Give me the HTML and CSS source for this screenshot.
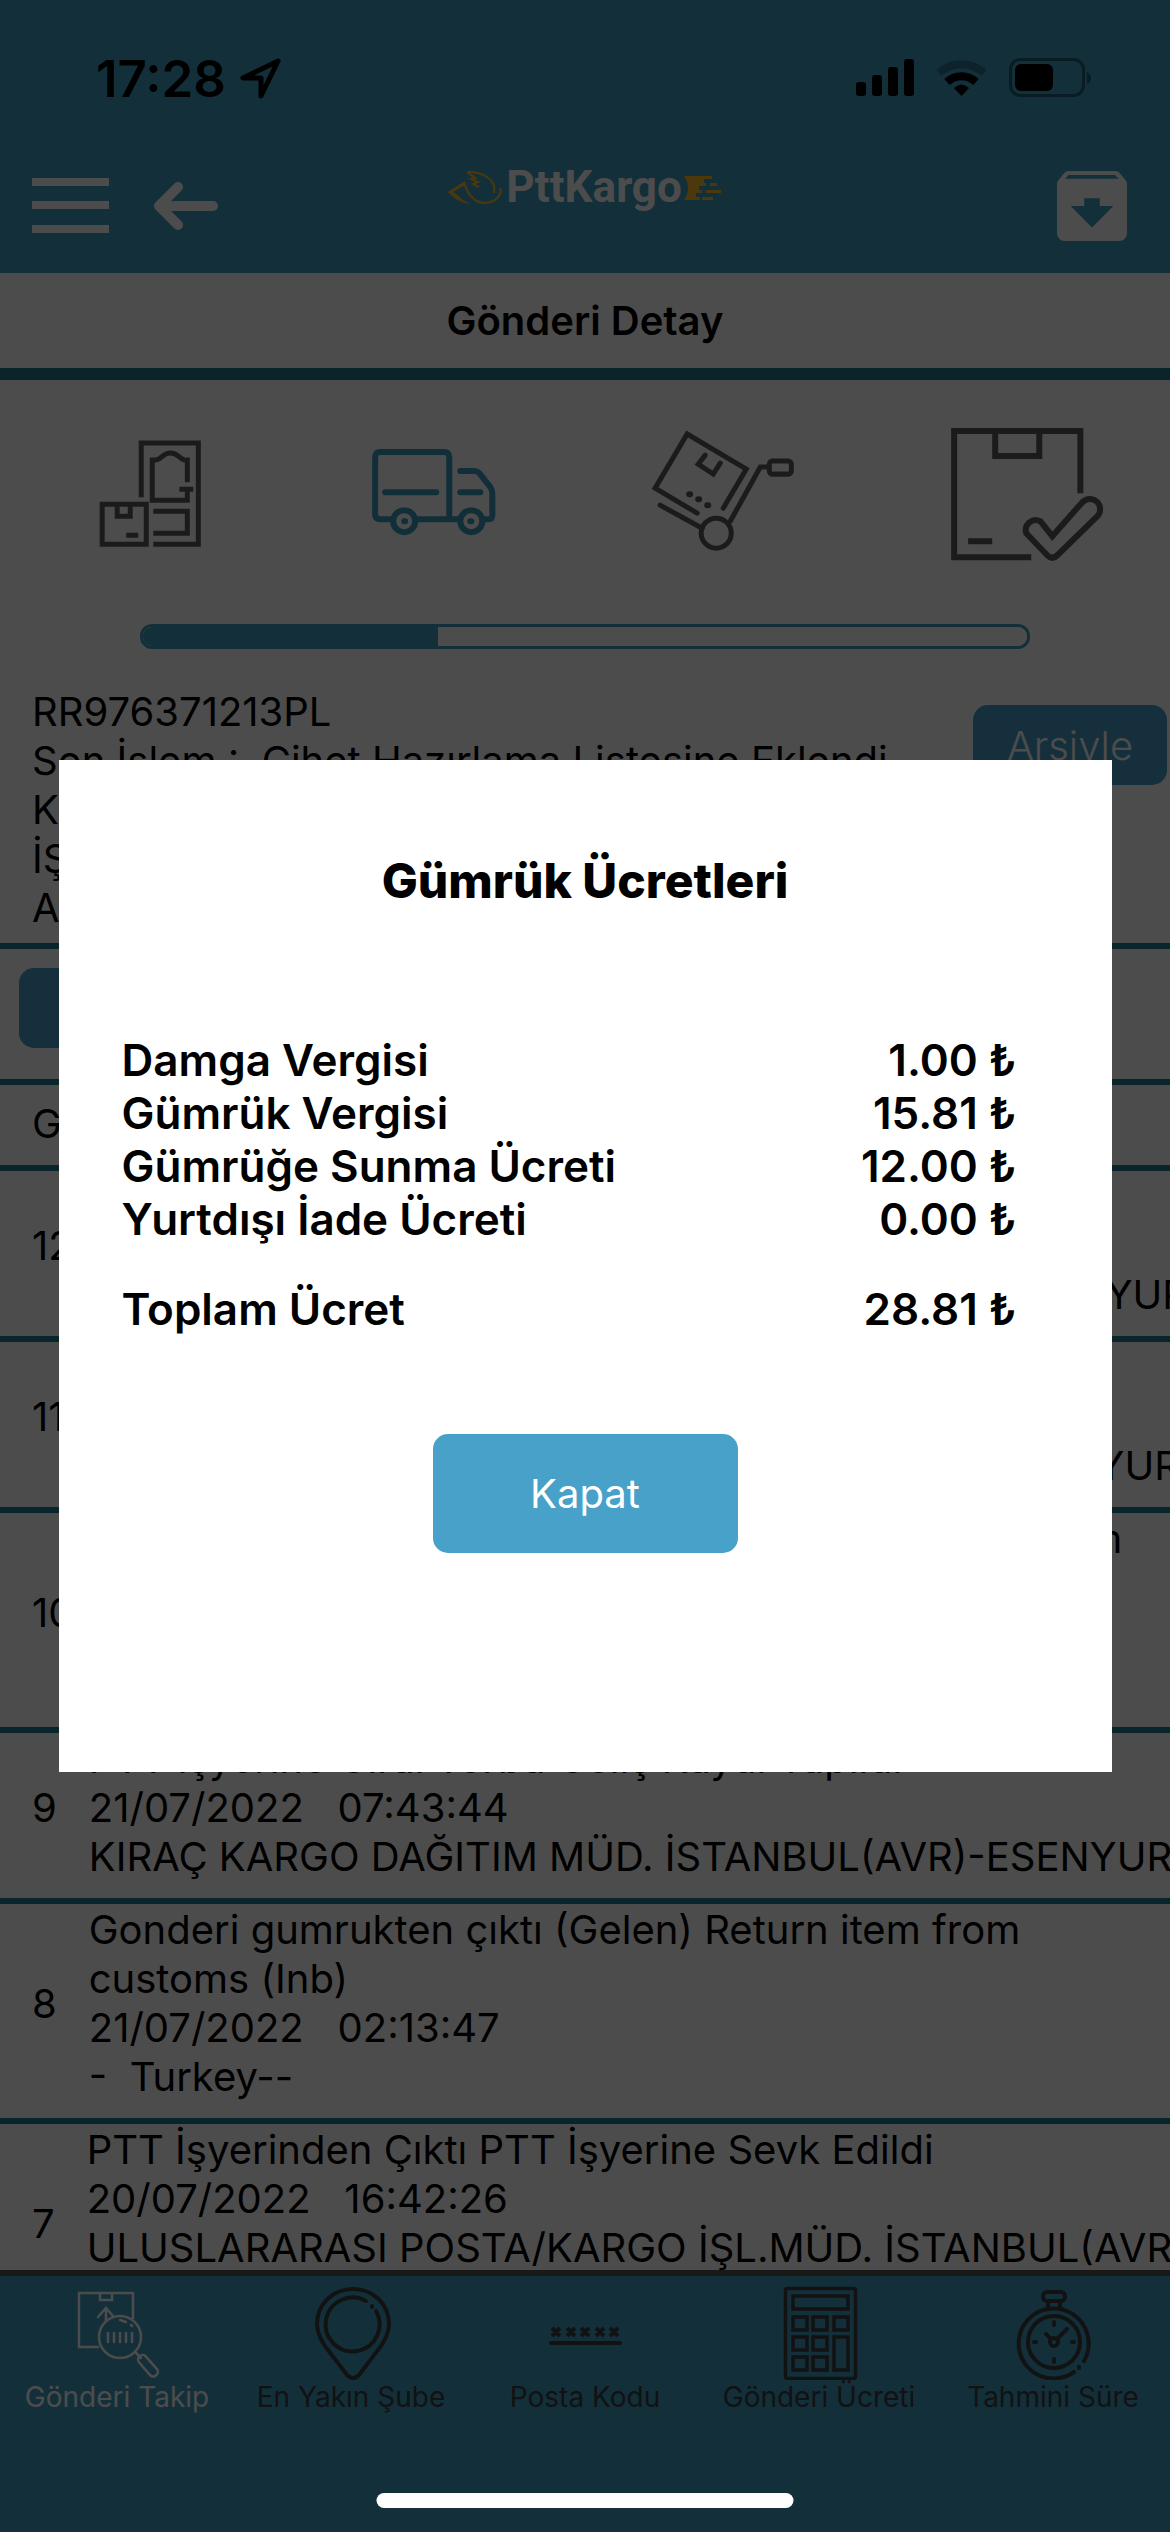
FILE: index.html
```html
<!DOCTYPE html>
<html lang="tr">
<head>
    <meta charset="UTF-8">
    <meta name="viewport" content="width=device-width, initial-scale=1.0">
    <title>PttKargo - Gönderi Detay</title>
    <link rel="stylesheet" href="styles.css">
</head>
<body>
    <div class="app">
        <header class="header">
            <div class="status-bar">
                <div class="clock">
                    <span>17:28</span>
                    <svg width="41" height="41" viewBox="0 0 41 41" fill="none" stroke="#000" stroke-width="5" stroke-linejoin="round">
                        <path d="M38 3L3 20H21V38Z"/>
                    </svg>
                </div>
                <svg width="236" height="40" viewBox="0 0 236 40">
                    <rect x="0" y="24" width="10" height="14" rx="3"/>
                    <rect x="16" y="17" width="10" height="21" rx="3"/>
                    <rect x="32" y="9" width="10" height="29" rx="3"/>
                    <rect x="48" y="1" width="10" height="37" rx="3"/>
                    <g fill="none" stroke="#000" stroke-width="8">
                        <path d="M83 15A33 33 0 0 1 128 15" opacity=".25"/>
                        <path d="M91 24A21 21 0 0 1 120 24"/>
                    </g>
                    <path d="M105.500 38L98 30Q105.500 23 113 30Z"/>
                    <rect x="154.500" y="1.500" width="73" height="36" rx="10" fill="none" stroke="#000" stroke-width="3" opacity=".4"/>
                    <rect x="159" y="6" width="38" height="27" rx="6"/>
                    <path d="M231 14Q235 16 235 20Q235 24 231 26Z" opacity=".4"/>
                </svg>
            </div>
            <div class="nav-bar">
                <div class="nav-left">
                    <button type="button" class="icon-button" aria-label="Menü">
                        <svg width="77" height="55" viewBox="0 0 77 55" fill="#fff">
                            <path d="M0 0H77V8H0ZM0 23H77V31H0ZM0 47H77V55H0Z"/>
                        </svg>
                    </button>
                    <button type="button" class="icon-button" aria-label="Geri">
                        <svg width="64" height="48" viewBox="0 0 64 48" fill="none" stroke="#fff" stroke-width="10" stroke-linecap="round" stroke-linejoin="round">
                            <path d="M59 24H5M24 5L5 24L24 43"/>
                        </svg>
                    </button>
                </div>
                <div class="logo">
                    <svg width="56" height="36" viewBox="0 0 56 36" fill="none" stroke="#fdbc2c" stroke-width="2">
                        <path d="M0 22L17 11L18 18L15 16L5 22C12 26 14 31 23 34C12 33 6 28 0 22Z" fill="#fdbc2c" stroke="none"/>
                        <path d="M17 14C19 24 27 33 37 33C45 33 50 29 53 22L52 18"/>
                        <path d="M20 2C34 2 49 9 46 23"/>
                        <path d="M19 2L27 8L23 9L30 12L25 14L31 17"/>
                    </svg>
                    <span>PttKargo</span>
                    <svg width="38" height="26" viewBox="0 0 38 26" fill="#fdbc2c">
                        <path d="M0 1H28V4H20V8H22V11H15V15H18V18H12V22H16V25H0Q8 13 0 1Z"/>
                        <path d="M26 8H33V11H26ZM22 15H37V18H22ZM18 22H29V25H18Z"/>
                    </svg>
                </div>
                <div class="nav-right">
                    <button type="button" class="icon-button" aria-label="Arşiv">
                        <svg width="70" height="70" viewBox="3 3 18 18" fill="#fff">
                            <path d="M20.540 5.230l-1.390-1.680C18.880 3.210 18.470 3 18 3H6c-.47 0-.88.21-1.160.55L3.460 5.230C3.170 5.570 3 6.020 3 6.500V19c0 1.100.9 2 2 2h14c1.100 0 2-.9 2-2V6.500c0-.48-.17-.93-.46-1.270zM12 17.500L6.500 12H10v-2h4v2h3.500L12 17.500zM5.120 5l.81-1h12l.94 1H5.120z"/>
                        </svg>
                    </button>
                </div>
            </div>
        </header>

        <main class="content">
            <h1 class="page-title">Gönderi Detay</h1>

            <div class="steps">
                <svg viewBox="0 0 292 180" fill="none" stroke="#5c5c5c" stroke-width="5">
                    <path d="M141 97V43H198V144H153"/>
                    <path d="M187 82V60H184C178 58 178 53 170 53C162 53 161 60 155 60H152V100H187V90M179 89H193"/>
                    <path d="M153 111H187V133H153"/>
                    <path d="M102 104H146V144H102ZM117 104V116H130V104M126 135H138"/>
                </svg>
                <svg viewBox="0 0 292 180" fill="none" stroke="#3c9cbd" stroke-width="6" stroke-linecap="round" stroke-linejoin="round">
                    <path d="M99 119H87Q82 119 82 114V58Q82 52 87 52H151Q156 52 156 58V119M124 119H165"/>
                    <path d="M167 71H181Q184 71 186 73L197 87Q199 90 199 93V115Q199 119 195 119H190"/>
                    <path d="M92 92H143M167 92H187"/>
                    <circle cx="111" cy="121" r="11"/>
                    <circle cx="178" cy="121" r="11"/>
                    <path d="M111 121h1M177 121h1"/>
                </svg>
                <svg viewBox="0 0 292 180" fill="none" stroke="#5c5c5c" stroke-width="5" stroke-linecap="round">
                    <path d="M138 108L161 69L102 34L70 88L112 113"/>
                    <path d="M120 55L113 64L128 74L135 63"/>
                    <path d="M104 94h1M113 99h1M122 105h1" stroke-width="6"/>
                    <path d="M75 105L117 128"/>
                    <circle cx="131" cy="133" r="15"/>
                    <path d="M145 121L175 67H183"/>
                    <rect x="184" y="61" width="22" height="13" rx="3"/>
                </svg>
                <svg viewBox="0 0 292 180" fill="none" stroke="#5c5c5c" stroke-width="6">
                    <path d="M202 93V31H76V157H153"/>
                    <path d="M117 31V56H161V31M90 141H114"/>
                    <path d="M174 136L204 102A10 10 0 0 1 219 116L179 155Q174 160 169 155L148 133A10 10 0 0 1 162 121Z"/>
                </svg>
            </div>
            <progress class="progress" value="1" max="3" aria-label="Gönderi durumu"></progress>

            <section class="summary">
                <p>RR976371213PL<br>
                    Son İşlem :&nbsp; Cihet Hazırlama Listesine Eklendi<br>
                    Kabul İşyeri :&nbsp; ULUSLARARASI POSTA<br>
                    İŞL.MÜD. İSTANBUL(AVR)<br>
                    Alıcı :</p>
                <button type="button" class="button">Arşivle</button>
            </section>
            <div class="fees">
                <button type="button" class="button">Gümrük Ücretleri</button>
            </div>
            <h2 class="list-title">Gönderi Hareketleri</h2>

            <ol class="movements">
                <li>
                    <span>12</span>
                    <p>Cihet Hazırlama Listesine Eklendi<br>
                        21/07/2022 &nbsp; 09:12:30<br>
                        <span class="place">KIRAÇ KARGO DAĞITIM MÜD. İSTANBUL(AVR)-ESENYURT</span></p>
                </li>
                <li>
                    <span>11</span>
                    <p>Torba Açıldı Kayıt Yapıldı<br>
                        21/07/2022 &nbsp; 08:05:12<br>
                        <span class="place">KIRAÇ KARGO DAĞITIM MÜD. İSTANBUL(AVR)-ESENYURT</span></p>
                </li>
                <li>
                    <span>10</span>
                    <p>Gonderi gumruk sunumu (Gelen) Send item to custom (Inb)<br>
                        21/07/2022 &nbsp; 07:50:02<br>
                        - &nbsp;Turkey--</p>
                </li>
                <li>
                    <span>9</span>
                    <p>PTT İşyerine Giral Torba Geliş Kaydı Yapıldı<br>
                        21/07/2022 &nbsp; 07:43:44<br>
                        <span class="place">KIRAÇ KARGO DAĞITIM MÜD. İSTANBUL(AVR)-ESENYURT</span></p>
                </li>
                <li>
                    <span>8</span>
                    <p>Gonderi gumrukten çıktı (Gelen) Return item from customs (Inb)<br>
                        21/07/2022 &nbsp; 02:13:47<br>
                        - &nbsp;Turkey--</p>
                </li>
                <li>
                    <span>7</span>
                    <p>PTT İşyerinden Çıktı PTT İşyerine Sevk Edildi<br>
                        20/07/2022 &nbsp; 16:42:26<br>
                        <span class="place">ULUSLARARASI POSTA/KARGO İŞL.MÜD. İSTANBUL(AVR)</span><br>
                        Turkey</p>
                </li>
            </ol>
        </main>

        <nav class="tab-bar">
            <a href="#" class="active">
                <svg width="100" height="96" viewBox="0 0 100 96" fill="none" stroke="currentColor" stroke-width="2.500" stroke-linecap="round">
                    <path d="M66 34V9H12V63H31M33 9V16H45V9"/>
                    <path d="M31 33L39 24L46 32M39 25V37"/>
                    <circle cx="53" cy="53" r="21"/>
                    <path d="M41 49V58M47 49V58M53 49V58M59 49V58M65 49V58"/>
                    <path d="M53 36L59 38M64 41L65 42M69 69L74 74"/>
                    <rect x="-12" y="-4" width="25" height="9" rx="4" transform="translate(81 81) rotate(49)"/>
                </svg>
                Gönderi Takip
            </a>
            <a href="#">
                <svg width="100" height="96" viewBox="0 0 100 96" fill="none" stroke="currentColor" stroke-width="4" stroke-linecap="round">
                    <path d="M52 5C72 5 88 20 88 40C88 48 84 56 80 62L58 91Q52 97 46 91L24 62C20 56 16 48 16 40C16 20 32 5 52 5Z"/>
                    <path d="M65 17A27 27 0 1 0 75 27M71 22v1"/>
                </svg>
                En Yakın Şube
            </a>
            <a href="#">
                <svg width="100" height="96" viewBox="0 0 100 96" fill="none" stroke="currentColor" stroke-width="4">
                    <path d="M17 44l8 8m0-8l-8 8M32 44l8 8m0-8l-8 8M46 44l8 8m0-8l-8 8M61 44l8 8m0-8l-8 8M75 44l8 8m0-8l-8 8"/>
                    <path d="M16 59H85" stroke-linecap="round"/>
                </svg>
                Posta Kodu
            </a>
            <a href="#">
                <svg width="100" height="96" viewBox="0 0 100 96" fill="none" stroke="currentColor" stroke-width="3.500">
                    <rect x="16.500" y="4.500" width="70" height="90" rx="2"/>
                    <path d="M24 12H79V25H24Z"/>
                    <path d="M24 33H38V46H24ZM44 33H58V46H44ZM65 33H79V46H65Z"/>
                    <path d="M24 53H38V66H24ZM44 53H58V66H44ZM65 53H79V86H65Z"/>
                    <path d="M24 73H38V86H24ZM44 73H58V86H44Z"/>
                </svg>
                Gönderi Ücreti
            </a>
            <a href="#">
                <svg width="100" height="96" viewBox="0 0 100 96" fill="none" stroke="currentColor" stroke-width="4" stroke-linecap="round">
                    <rect x="40" y="8" width="22" height="9" rx="4"/>
                    <path d="M45 17V23M57 17V23"/>
                    <path d="M81 77A35 35 0 1 0 71 88M76 83v1"/>
                    <circle cx="51" cy="58" r="26"/>
                    <circle cx="51" cy="58" r="4"/>
                    <path d="M48 55L43 50M54 55L64 45M51 38V41M51 75V78M31 58H33M69 58H71"/>
                </svg>
                Tahmini Süre
            </a>
        </nav>
    </div>

    <div class="overlay">
        <div class="modal" role="dialog" aria-labelledby="modalTitle">
            <h2 id="modalTitle">Gümrük Ücretleri</h2>
            <div class="fee-list">
                <table>
                    <tbody>
                        <tr><th scope="row">Damga Vergisi</th><td>1.00 ₺</td></tr>
                        <tr><th scope="row">Gümrük Vergisi</th><td>15.81 ₺</td></tr>
                        <tr><th scope="row">Gümrüğe Sunma Ücreti</th><td>12.00 ₺</td></tr>
                        <tr><th scope="row">Yurtdışı İade Ücreti</th><td>0.00 ₺</td></tr>
                    </tbody>
                    <tfoot>
                        <tr><th scope="row">Toplam Ücret</th><td>28.81 ₺</td></tr>
                    </tfoot>
                </table>
            </div>
            <button type="button" class="button close">Kapat</button>
        </div>
        <div class="home-indicator"></div>
    </div>
</body>
</html>
```

FILE: styles.css
```css
* {
    box-sizing: border-box;
}

body {
    margin: 0;
    font-family: Inter, "Liberation Sans", sans-serif;
    font-size: 40px;
    line-height: 49px;
    color: #000;
    background-color: #fff;
}

h1, h2, p, ol {
    margin: 0;
    padding: 0;
}

svg {
    display: block;
}

.app {
    display: flex;
    flex-direction: column;
    height: 100vh;
    overflow: hidden;
}

/* header */

.header {
    flex: none;
    background-color: #3d9fc4;
}

.status-bar {
    display: flex;
    justify-content: space-between;
    align-items: center;
    height: 144px;
    padding: 12px 78px 0 96px;
}

.clock {
    display: flex;
    align-items: center;
    gap: 14px;
    font-size: 51px;
    font-weight: 600;
}

.nav-bar {
    display: grid;
    grid-template-columns: 1fr auto 1fr;
    align-items: center;
    height: 129px;
    padding: 0 32px 6px;
}

.nav-left {
    display: flex;
    align-items: center;
    gap: 45px;
}

.nav-right {
    display: flex;
    justify-content: flex-end;
    padding-right: 11px;
}

.icon-button {
    padding: 0;
    border: none;
    background: none;
    cursor: pointer;
}

.logo {
    display: flex;
    align-items: center;
    gap: 2px;
    padding-bottom: 36px;
    font-family: Roboto, sans-serif;
    font-size: 44px;
    font-weight: 700;
    color: #fff;
}

/* page */

.content {
    flex: 1;
    min-height: 0;
    overflow: hidden;
}

.page-title {
    padding: 23px 0;
    border-bottom: 12px solid #21788f;
    font-size: 40px;
    font-weight: 600;
    text-align: center;
}

.steps {
    display: grid;
    grid-template-columns: repeat(4, 1fr);
    padding: 20px 0 44px;
}

.steps svg {
    width: 100%;
}

.progress {
    display: block;
    width: 76%;
    height: 25px;
    margin: 0 auto;
    border: 3px solid #3d9fc4;
    border-radius: 12px;
    background-color: #fff;
    overflow: hidden;
    appearance: none;
}

.progress::-webkit-progress-bar {
    background-color: #fff;
}

.progress::-webkit-progress-value {
    background-color: #3d9fc4;
}

.summary {
    display: flex;
    justify-content: space-between;
    align-items: flex-start;
    padding: 38px 0 11px 32px;
    border-bottom: 6px solid #21788f;
}

.summary p {
    white-space: nowrap;
}

.button {
    height: 86px;
    padding: 0 32px;
    border: 3px solid #fff;
    border-radius: 18px;
    background-color: #48a1c8;
    color: #fff;
    font-family: inherit;
    font-size: 40px;
    font-weight: 400;
    cursor: pointer;
}

.summary .button {
    width: 200px;
    margin-top: 15px;
    font-weight: 300;
}

.fees {
    padding: 16px 16px 28px;
    border-bottom: 6px solid #21788f;
}

.fees .button {
    width: 500px;
}

.list-title {
    padding: 14px 32px 17px;
    border-bottom: 6px solid #21788f;
    font-size: 40px;
    font-weight: 400;
}

.movements {
    list-style: none;
}

.movements li {
    display: flex;
    align-items: center;
    gap: 32px;
    padding: 1px 0 17px 32px;
    border-bottom: 6px solid #21788f;
}

.movements p {
    flex: 1;
    min-width: 0;
}

.place {
    white-space: nowrap;
}

/* bottom tabs */

.tab-bar {
    flex: none;
    display: grid;
    grid-template-columns: repeat(5, 1fr);
    height: 262px;
    padding-top: 8px;
    border-top: 6px solid #555;
    background-color: #3d9fc4;
}

.tab-bar a {
    display: flex;
    flex-direction: column;
    align-items: center;
    font-size: 28px;
    line-height: 34px;
    color: #3c3c3c;
    text-decoration: none;
}

.tab-bar .active {
    color: #fff;
}

/* fee dialog */

.overlay {
    position: fixed;
    inset: 0;
    background-color: rgba(0, 0, 0, 0.7);
}

.modal {
    position: absolute;
    top: 30%;
    left: 5%;
    width: 90%;
    height: 40%;
    padding-top: 91px;
    background-color: #fff;
}

.modal h2 {
    font-size: 48px;
    line-height: 60px;
    font-weight: 800;
    text-align: center;
}

.fee-list {
    padding: 123px 95px 95px 63px;
}

.fee-list table {
    width: 100%;
    border-collapse: collapse;
    font-size: 44px;
    line-height: 53px;
}

.fee-list th,
.fee-list td {
    padding: 0;
    font-weight: 600;
    text-align: left;
}

.fee-list td {
    text-align: right;
}

.fee-list tfoot th,
.fee-list tfoot td {
    padding-top: 37px;
}

.close {
    display: block;
    width: 311px;
    height: 125px;
    margin: 0 auto;
}

.home-indicator {
    position: absolute;
    bottom: 24px;
    left: 50%;
    width: 417px;
    height: 15px;
    border-radius: 8px;
    background-color: #fff;
    transform: translateX(-50%);
}
```
